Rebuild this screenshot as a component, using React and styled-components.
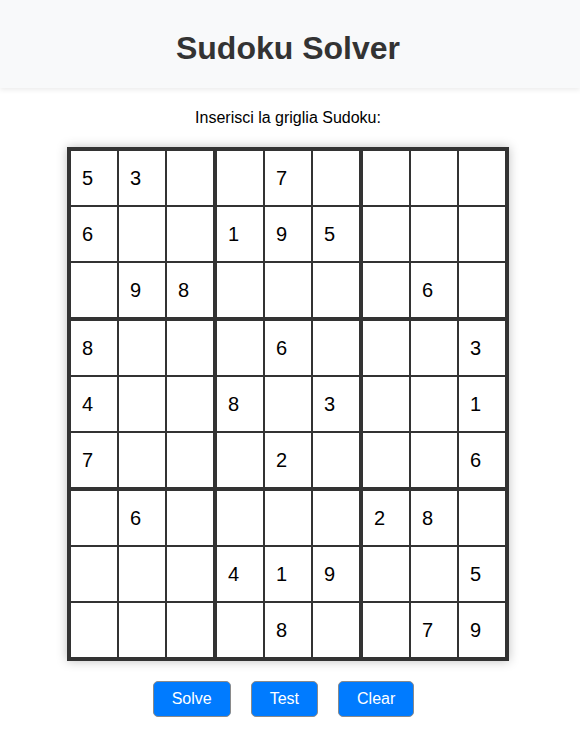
import React from 'react'
import styled, { createGlobalStyle } from 'styled-components'

const puzzle = [
    [5, 3, 0, 0, 7, 0, 0, 0, 0],
    [6, 0, 0, 1, 9, 5, 0, 0, 0],
    [0, 9, 8, 0, 0, 0, 0, 6, 0],
    [8, 0, 0, 0, 6, 0, 0, 0, 3],
    [4, 0, 0, 8, 0, 3, 0, 0, 1],
    [7, 0, 0, 0, 2, 0, 0, 0, 6],
    [0, 6, 0, 0, 0, 0, 2, 8, 0],
    [0, 0, 0, 4, 1, 9, 0, 0, 5],
    [0, 0, 0, 0, 8, 0, 0, 7, 9],
]

export default function App() {
    return (
        <>
            <GlobalStyle />
            <Header>
                <Title>Sudoku Solver</Title>
            </Header>
            <Main>
                <Label>Inserisci la griglia Sudoku:</Label>
                <Board>
                    {puzzle.map((row, r) =>
                        row.map((v, c) => (
                            <Cell key={r + '-' + c} $row={r} $col={c}>
                                <CellInput
                                    type="text"
                                    maxLength={1}
                                    defaultValue={v ? String(v) : ''}
                                />
                            </Cell>
                        ))
                    )}
                </Board>
                <Actions>
                    <Button>Solve</Button>
                    <Button>Test</Button>
                    <Button>Clear</Button>
                </Actions>
            </Main>
        </>
    )
}

const GlobalStyle = createGlobalStyle`
    body {
        margin: 0;
        background: #fff;
        font-family: Arial, "Liberation Sans", sans-serif;
    }
`

const Header = styled.header`
    background: #f8f9fa;
    box-shadow: 0 2px 5px rgba(0, 0, 0, 0.08);
    padding: 30px 4px 21px 0;
    text-align: center;
`

const Title = styled.h1`
    margin: 0;
    font-size: 32px;
    font-weight: bold;
    color: #333;
`

const Main = styled.main`
    display: flex;
    flex-direction: column;
    align-items: center;
    padding: 21px 4px 0 0;
`

const Label = styled.p`
    margin: 0 0 20px;
    font-size: 16px;
    color: #000;
`

const Board = styled.div`
    display: grid;
    grid-template-columns: repeat(9, auto);
    border: 4px solid #333;
    background: #fff;
    box-shadow: 0 0 10px rgba(0, 0, 0, 0.25);
`

const Cell = styled.div`
    width: 46px;
    height: 54px;
    border-right: ${p => (p.$col === 8 ? 'none' : p.$col % 3 === 2 ? '4px solid #333' : '2px solid #333')};
    border-bottom: ${p => (p.$row === 8 ? 'none' : p.$row % 3 === 2 ? '4px solid #333' : '2px solid #333')};
`

const CellInput = styled.input`
    box-sizing: border-box;
    width: 100%;
    height: 100%;
    border: none;
    outline: none;
    padding: 0 0 0 11px;
    margin: 0;
    background: transparent;
    font-family: Arial, "Liberation Sans", sans-serif;
    font-size: 20px;
    color: #000;
`

const Actions = styled.div`
    display: flex;
    gap: 20px;
    margin: 20px 9px 0 0;
`

const Button = styled.button`
    padding: 8px 18px;
    font-family: Arial, "Liberation Sans", sans-serif;
    font-size: 16px;
    line-height: 18px;
    color: #fff;
    background: #007bff;
    border: 1px solid #8a8a8a;
    border-radius: 5px;
    cursor: pointer;
`
